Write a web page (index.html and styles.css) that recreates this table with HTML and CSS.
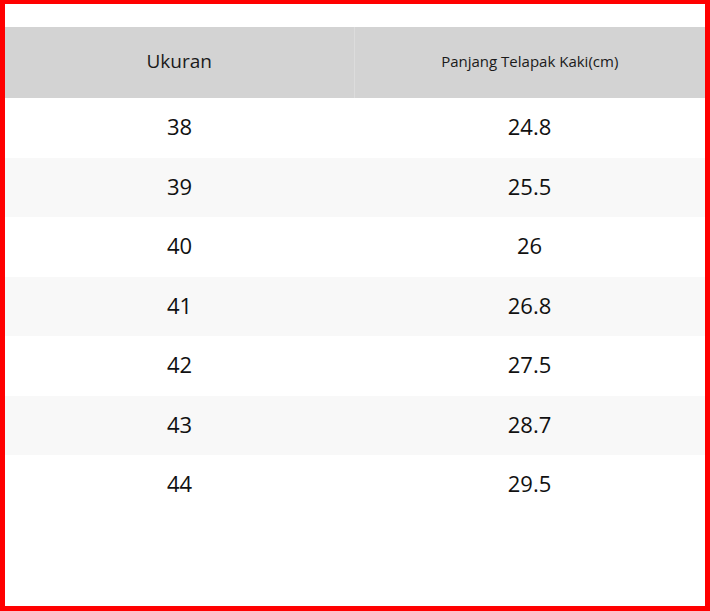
FILE: index.html
```html
<!DOCTYPE html>
<html lang="id">
<head>
<meta charset="utf-8">
<title>Ukuran</title>
<link rel="stylesheet" href="styles.css">
</head>
<body>
<div class="frame">
  <table class="size-table">
    <thead>
      <tr>
        <th class="col-size">Ukuran</th>
        <th class="col-length">Panjang Telapak Kaki(cm)</th>
      </tr>
    </thead>
    <tbody>
      <tr><td>38</td><td>24.8</td></tr>
      <tr><td>39</td><td>25.5</td></tr>
      <tr><td>40</td><td>26</td></tr>
      <tr><td>41</td><td>26.8</td></tr>
      <tr><td>42</td><td>27.5</td></tr>
      <tr><td>43</td><td>28.7</td></tr>
      <tr><td>44</td><td>29.5</td></tr>
    </tbody>
  </table>
</div>
</body>
</html>
```
FILE: styles.css
```css
html, body {
  margin: 0;
  padding: 0;
  background: #fff;
}
.frame {
  box-sizing: border-box;
  width: 710px;
  height: 611px;
  border: 5px solid #ff0000;
  border-top-width: 4px;
  padding-top: 23px;
  font-family: "Open Sans", "Noto Sans", sans-serif;
}
.size-table {
  width: 700px;
  border-collapse: collapse;
  table-layout: fixed;
}
.size-table th {
  box-sizing: border-box;
  height: 71px;
  padding: 0 0 3px;
  background: #d3d3d3;
  font-weight: 400;
  color: #1a1a1a;
  text-align: center;
  vertical-align: middle;
}
.col-size {
  width: 349px;
  font-size: 19px;
  border-right: 1px solid #dcdcdc;
}
.col-length {
  font-size: 15px;
}
.size-table td {
  box-sizing: border-box;
  height: 59.5px;
  padding: 0 0 3px;
  text-align: center;
  vertical-align: middle;
  font-size: 22px;
  color: #111;
}
.size-table tbody tr:nth-child(even) td {
  background: #f8f8f8;
}
```
